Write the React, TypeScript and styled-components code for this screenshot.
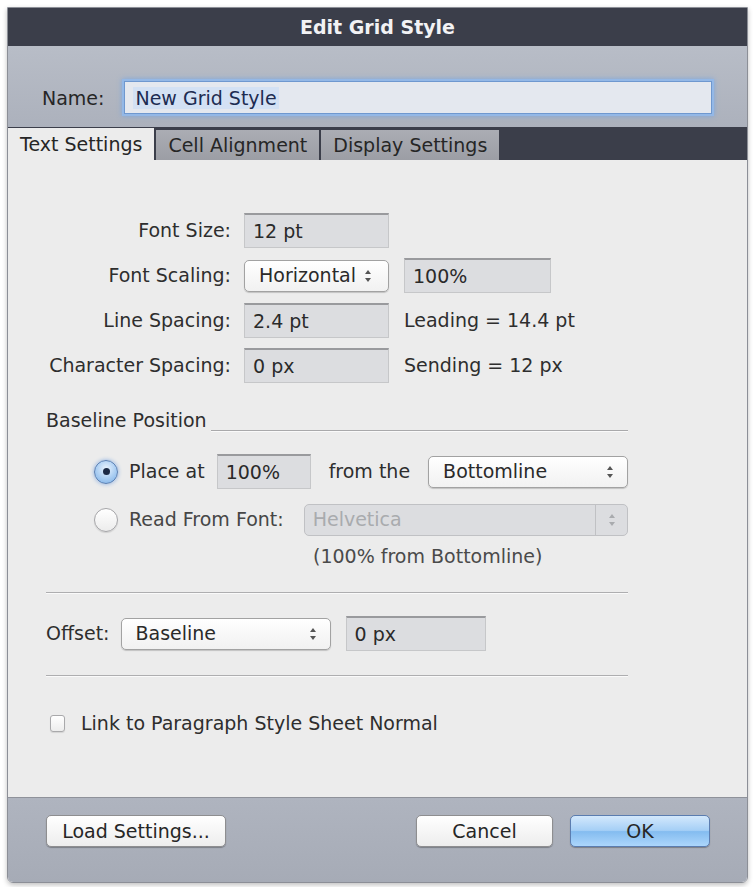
import React from 'react';
import styled, { createGlobalStyle } from 'styled-components';

const GlobalStyle = createGlobalStyle`
  html, body {
    margin: 0;
    padding: 0;
    background: #ffffff;
  }
  body {
    font-family: "DejaVu Sans", "Liberation Sans", sans-serif;
    font-size: 19px;
    color: #2e2e2e;
  }
  #root {
    padding: 7px;
  }
`;

const Window = styled.div`
  width: 741px;
  height: 876px;
  box-sizing: border-box;
  border: 1px solid #8c8f97;
  border-radius: 0 0 6px 6px;
  display: flex;
  flex-direction: column;
  overflow: hidden;
  box-shadow: 0 2px 5px rgba(0, 0, 0, 0.25);
`;

const TitleBar = styled.div`
  flex: none;
  height: 38px;
  background: #3b3e4a;
  color: #f2f2f4;
  font-weight: bold;
  font-size: 19px;
  display: flex;
  align-items: center;
  justify-content: center;
`;

const NameBar = styled.div`
  flex: none;
  height: 81px;
  box-sizing: border-box;
  padding: 35px 35px 13px 34px;
  background: linear-gradient(#b8bdc7, #acb1bc);
  display: flex;
  align-items: center;
`;

const NameLabel = styled.span`
  color: #262626;
  margin-right: 20px;
`;

const NameInput = styled.div`
  flex: 1;
  height: 33px;
  box-sizing: border-box;
  background: #e4e8ef;
  border: 1px solid #6f98cf;
  box-shadow: 0 0 0 2px #94b8e6, 0 0 5px 2px #7ea7dd;
  padding-left: 8px;
  display: flex;
  align-items: center;
  color: #1d2c52;
`;

const Selected = styled.span`
  background: #d3e1f4;
  padding: 0 2px;
`;

const TabStrip = styled.div`
  flex: none;
  height: 33px;
  background: #3b3e4a;
  display: flex;
  align-items: flex-end;
`;

const Tab = styled.div<{ $active?: boolean }>`
  height: ${(p) => (p.$active ? '32px' : '30px')};
  box-sizing: border-box;
  padding: 0 12px;
  margin-right: 2px;
  display: flex;
  align-items: center;
  color: #262626;
  background: ${(p) => (p.$active ? '#ececec' : 'linear-gradient(#abadb4, #9c9ea5)')};
`;

const Content = styled.div`
  flex: 1;
  background: #ececec;
  padding: 53px 119px 0 38px;
  line-height: 23px;
`;

const Grid = styled.div`
  display: grid;
  grid-template-columns: 185px 145px 1fr;
  grid-auto-rows: 35px;
  column-gap: 13px;
  row-gap: 10px;
  align-items: center;
`;

const RowLabel = styled.span`
  text-align: right;
`;

const Field = styled.div<{ $width?: number }>`
  width: ${(p) => (p.$width ? `${p.$width}px` : 'auto')};
  height: 35px;
  box-sizing: border-box;
  background: #dcdde0;
  border: 1px solid #c6c7c9;
  border-top: 2px solid #999a9d;
  padding: 0 8px;
  display: flex;
  align-items: center;
  color: #2a2a2a;
`;

const Side = styled.span`
  margin-left: 2px;
  display: flex;
  align-items: center;
  gap: 15px;
`;

const Select = styled.div<{ $width?: number; $compact?: boolean; $disabled?: boolean }>`
  width: ${(p) => (p.$width ? `${p.$width}px` : 'auto')};
  flex: ${(p) => (p.$width ? 'none' : '1')};
  height: 32px;
  box-sizing: border-box;
  border: 1px solid ${(p) => (p.$disabled ? '#c0c1c4' : '#a2a2a2')};
  border-radius: 5px;
  background: ${(p) => (p.$disabled ? '#dcdde0' : 'linear-gradient(#ffffff, #f1f1f1)')};
  box-shadow: ${(p) => (p.$disabled ? 'none' : '0 1px 1px rgba(0, 0, 0, 0.18)')};
  color: ${(p) => (p.$disabled ? '#a9abae' : '#2a2a2a')};
  display: flex;
  align-items: center;
  justify-content: ${(p) => (p.$compact ? 'flex-start' : 'space-between')};
  gap: 8px;
  padding: 0 ${(p) => (p.$disabled ? '0' : '13px')} 0 ${(p) => (p.$disabled ? '8px' : '14px')};
`;

const ArrowBox = styled.span<{ $split?: boolean }>`
  display: flex;
  align-items: center;
  justify-content: center;
  align-self: stretch;
  width: ${(p) => (p.$split ? '31px' : 'auto')};
  border-left: ${(p) => (p.$split ? '1px solid #c0c1c4' : 'none')};
`;

const Arrows = ({ color = '#555' }: { color?: string }) => (
  <svg width="8" height="14" viewBox="0 0 8 14">
    <path d="M4 1 L7 5 L1 5 Z" fill={color} />
    <path d="M4 13 L7 9 L1 9 Z" fill={color} />
  </svg>
);

const SectionHead = styled.div`
  display: flex;
  margin-top: 26px;
`;

const HeadLine = styled.div`
  flex: 1;
  align-self: flex-end;
  margin-left: 4px;
  height: 1px;
  background: #a9a9ab;
  border-bottom: 1px solid #fafafa;
`;

const OptionRow = styled.div<{ $top: number }>`
  height: 35px;
  margin-top: ${(p) => p.$top}px;
  margin-left: 48px;
  display: flex;
  align-items: center;
`;

const Radio = styled.span<{ $on?: boolean }>`
  flex: none;
  width: 24px;
  height: 24px;
  box-sizing: border-box;
  border-radius: 50%;
  border: 1px solid ${(p) => (p.$on ? '#5a7fb3' : '#a5a5a8')};
  background: ${(p) =>
    p.$on
      ? 'radial-gradient(circle at 50% 35%, #eaf3fd 0%, #a9cdf2 55%, #7aaee5 100%)'
      : 'linear-gradient(#ffffff, #ececec)'};
  box-shadow: ${(p) => (p.$on ? '0 0 4px #86ace0' : '0 1px 1px rgba(0,0,0,0.12)')};
  display: flex;
  align-items: center;
  justify-content: center;
  margin-right: 11px;

  &::after {
    content: '';
    display: ${(p) => (p.$on ? 'block' : 'none')};
    width: 7px;
    height: 7px;
    border-radius: 50%;
    background: #1c2a45;
  }
`;

const Text = styled.span<{ $gap?: number; $muted?: boolean }>`
  margin-right: ${(p) => p.$gap ?? 0}px;
  color: ${(p) => (p.$muted ? '#464646' : '#2e2e2e')};
  white-space: nowrap;
`;

const Note = styled.div`
  margin-top: 8px;
  margin-left: 267px;
  color: #4a4a4a;
`;

const Divider = styled.div<{ $top: number }>`
  margin-top: ${(p) => p.$top}px;
  height: 1px;
  background: #aeaeb0;
  border-bottom: 1px solid #fafafa;
`;

const OffsetRow = styled.div`
  height: 35px;
  margin-top: 22px;
  display: flex;
  align-items: center;
  gap: 11px;
`;

const CheckRow = styled.div`
  margin-top: 35px;
  margin-left: 4px;
  display: flex;
  align-items: center;
  gap: 16px;
`;

const Checkbox = styled.span`
  width: 15px;
  height: 17px;
  box-sizing: border-box;
  border: 1px solid #a9a9ab;
  border-radius: 3px;
  background: linear-gradient(#ffffff, #ededed);
  box-shadow: 0 1px 1px rgba(0, 0, 0, 0.1);
`;

const Footer = styled.div`
  flex: none;
  height: 85px;
  box-sizing: border-box;
  border-top: 1px solid #8f929a;
  background: linear-gradient(#afb4bf, #a6abb6);
  padding: 17px 37px 0 38px;
  display: flex;
  align-items: flex-start;
`;

const Button = styled.button<{ $primary?: boolean; $width: number }>`
  width: ${(p) => p.$width}px;
  height: 32px;
  font-family: inherit;
  font-size: 19px;
  color: #262626;
  border: 1px solid ${(p) => (p.$primary ? '#5b7db0' : '#8e8e90')};
  border-radius: 5px;
  background: ${(p) =>
    p.$primary
      ? 'linear-gradient(#d3e8fc 0%, #a5cff6 48%, #84bcf0 52%, #acd6fb 100%)'
      : 'linear-gradient(#ffffff, #ededed)'};
  box-shadow: 0 1px 1px rgba(0, 0, 0, 0.28);
  padding: 0;
`;

const Spacer = styled.div`
  flex: 1;
`;

export default function App() {
  return (
    <>
      <GlobalStyle />
      <Window>
        <TitleBar>Edit Grid Style</TitleBar>
        <NameBar>
          <NameLabel>Name:</NameLabel>
          <NameInput>
            <Selected>New Grid Style</Selected>
          </NameInput>
        </NameBar>
        <TabStrip>
          <Tab $active>Text Settings</Tab>
          <Tab>Cell Alignment</Tab>
          <Tab>Display Settings</Tab>
        </TabStrip>
        <Content>
          <Grid>
            <RowLabel>Font Size:</RowLabel>
            <Field>12 pt</Field>
            <span />

            <RowLabel>Font Scaling:</RowLabel>
            <Select $compact>
              Horizontal
              <Arrows />
            </Select>
            <Side>
              <Field $width={147}>100%</Field>
            </Side>

            <RowLabel>Line Spacing:</RowLabel>
            <Field>2.4 pt</Field>
            <Side>Leading = 14.4 pt</Side>

            <RowLabel>Character Spacing:</RowLabel>
            <Field>0 px</Field>
            <Side>Sending = 12 px</Side>
          </Grid>

          <SectionHead>
            <Text>Baseline Position</Text>
            <HeadLine />
          </SectionHead>

          <OptionRow $top={22}>
            <Radio $on />
            <Text $gap={12}>Place at</Text>
            <Field $width={94}>100%</Field>
            <Text $gap={18} style={{ marginLeft: 18 }}>
              from the
            </Text>
            <Select>
              Bottomline
              <Arrows />
            </Select>
          </OptionRow>

          <OptionRow $top={13}>
            <Radio />
            <Text $gap={20} $muted>
              Read From Font:
            </Text>
            <Select $disabled>
              Helvetica
              <ArrowBox $split>
                <Arrows color="#a9abae" />
              </ArrowBox>
            </Select>
          </OptionRow>

          <Note>(100% from Bottomline)</Note>

          <Divider $top={24} />

          <OffsetRow>
            <Text>Offset:</Text>
            <Select $width={210}>
              Baseline
              <Arrows />
            </Select>
            <Field $width={140} style={{ marginLeft: 4 }}>
              0 px
            </Field>
          </OffsetRow>

          <Divider $top={24} />

          <CheckRow>
            <Checkbox />
            <Text>Link to Paragraph Style Sheet Normal</Text>
          </CheckRow>
        </Content>
        <Footer>
          <Button $width={180}>Load Settings...</Button>
          <Spacer />
          <Button $width={137}>Cancel</Button>
          <Button $width={140} $primary style={{ marginLeft: 17 }}>
            OK
          </Button>
        </Footer>
      </Window>
    </>
  );
}
